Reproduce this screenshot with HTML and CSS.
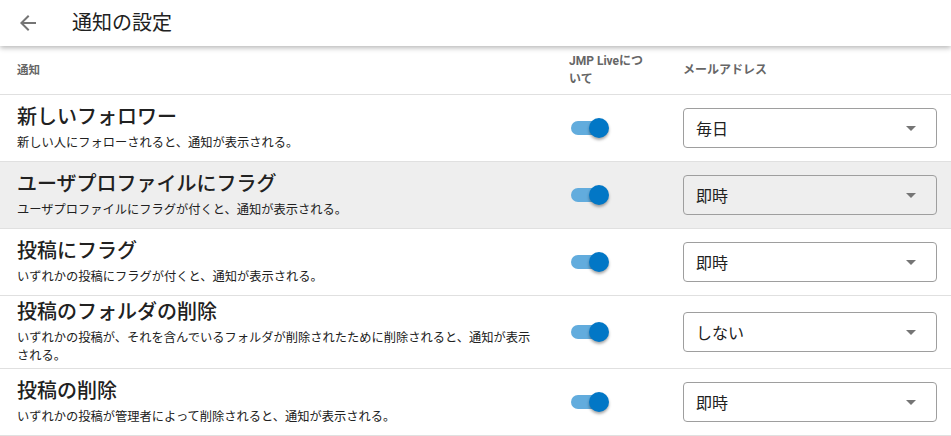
FILE: index.html
```html
<!DOCTYPE html>
<html lang="ja">
<head>
<meta charset="utf-8">
<title>通知の設定</title>
<link rel="stylesheet" href="styles.css">
</head>
<body>
<header class="app-bar">
  <button class="back-btn" aria-label="戻る">
    <svg viewBox="0 0 24 24" width="24" height="24"><path d="M20 11H7.83l5.59-5.59L12 4l-8 8 8 8 1.41-1.41L7.83 13H20v-2z" fill="#757575"/></svg>
  </button>
  <h1 class="app-title">通知の設定</h1>
</header>
<main class="settings">
  <div class="row head">
    <div class="cell col-name"><span class="head-label">通知</span></div>
    <div class="cell col-live"><span class="head-label live-label">JMP Liveについて</span></div>
    <div class="cell col-mail"><span class="head-label">メールアドレス</span></div>
  </div>

  <div class="row">
    <div class="cell col-name">
      <div class="title">新しいフォロワー</div>
      <div class="desc">新しい人にフォローされると、通知が表示される。</div>
    </div>
    <div class="cell col-live"><span class="switch"><span class="track"></span><span class="thumb"></span></span></div>
    <div class="cell col-mail"><div class="select"><span>毎日</span><span class="caret"></span></div></div>
  </div>

  <div class="row hover">
    <div class="cell col-name">
      <div class="title">ユーザプロファイルにフラグ</div>
      <div class="desc">ユーザプロファイルにフラグが付くと、通知が表示される。</div>
    </div>
    <div class="cell col-live"><span class="switch"><span class="track"></span><span class="thumb"></span></span></div>
    <div class="cell col-mail"><div class="select"><span>即時</span><span class="caret"></span></div></div>
  </div>

  <div class="row">
    <div class="cell col-name">
      <div class="title">投稿にフラグ</div>
      <div class="desc">いずれかの投稿にフラグが付くと、通知が表示される。</div>
    </div>
    <div class="cell col-live"><span class="switch"><span class="track"></span><span class="thumb"></span></span></div>
    <div class="cell col-mail"><div class="select"><span>即時</span><span class="caret"></span></div></div>
  </div>

  <div class="row">
    <div class="cell col-name">
      <div class="title">投稿のフォルダの削除</div>
      <div class="desc">いずれかの投稿が、それを含んでいるフォルダが削除されたために削除されると、通知が表示される。</div>
    </div>
    <div class="cell col-live"><span class="switch"><span class="track"></span><span class="thumb"></span></span></div>
    <div class="cell col-mail"><div class="select"><span>しない</span><span class="caret"></span></div></div>
  </div>

  <div class="row">
    <div class="cell col-name">
      <div class="title">投稿の削除</div>
      <div class="desc">いずれかの投稿が管理者によって削除されると、通知が表示される。</div>
    </div>
    <div class="cell col-live"><span class="switch"><span class="track"></span><span class="thumb"></span></span></div>
    <div class="cell col-mail"><div class="select"><span>即時</span><span class="caret"></span></div></div>
  </div>
</main>
</body>
</html>
```

FILE: styles.css
```css
* { box-sizing: border-box; }
html, body { margin: 0; padding: 0; background: #fff; }
body {
  font-family: Roboto, "Noto Sans CJK JP", "Noto Sans", sans-serif;
  color: #212121;
  overflow: hidden;
}

.app-bar {
  position: relative;
  z-index: 2;
  display: flex;
  align-items: center;
  height: 46px;
  padding-left: 16px;
  background: #fff;
  box-shadow: 0 2px 5px rgba(0, 0, 0, 0.28);
}
.back-btn {
  display: flex;
  width: 24px;
  height: 24px;
  padding: 0;
  border: 0;
  background: none;
  margin-right: 32px;
}
.app-title {
  margin: 0;
  font-size: 20px;
  font-weight: 400;
  line-height: 28px;
  color: #212121;
}

.settings { display: flex; flex-direction: column; }

.row {
  display: grid;
  grid-template-columns: 569px 114px 1fr;
  align-items: center;
  min-height: 67px;
  padding: 3px 0;
  border-bottom: 1px solid #e0e0e0;
}
.row.head { min-height: 49px; padding: 0; }
.row.hover { background: #eeeeee; }

.col-name { padding-left: 17px; padding-right: 30px; }
.col-live { padding-right: 34px; }
.col-mail { padding-right: 14px; }

.head-label {
  display: block;
  font-size: 12px;
  line-height: 18px;
  font-weight: 700;
  color: #666;
}
.col-name .head-label { font-size: 11.5px; }

.title {
  font-size: 20px;
  line-height: 26px;
  font-weight: 500;
  color: #212121;
}
.desc {
  margin-top: 4px;
  font-size: 12.25px;
  line-height: 18px;
  color: #212121;
}

.switch {
  position: relative;
  display: block;
  width: 40px;
  height: 20px;
}
.track {
  position: absolute;
  left: 2px;
  top: 3px;
  width: 34px;
  height: 14px;
  border-radius: 7px;
  background: #62acdd;
}
.thumb {
  position: absolute;
  left: 20px;
  top: 0;
  width: 20px;
  height: 20px;
  border-radius: 50%;
  background: #0277c6;
  box-shadow: 0 2px 3px rgba(0, 0, 0, 0.35);
}

.select {
  display: flex;
  align-items: center;
  justify-content: space-between;
  width: 254px;
  height: 40px;
  padding: 0 20px 0 12px;
  border: 1px solid #9e9e9e;
  border-radius: 4px;
  font-size: 16px;
  color: #212121;
}
.caret {
  width: 0;
  height: 0;
  border-left: 5px solid transparent;
  border-right: 5px solid transparent;
  border-top: 5px solid #757575;
}
```
